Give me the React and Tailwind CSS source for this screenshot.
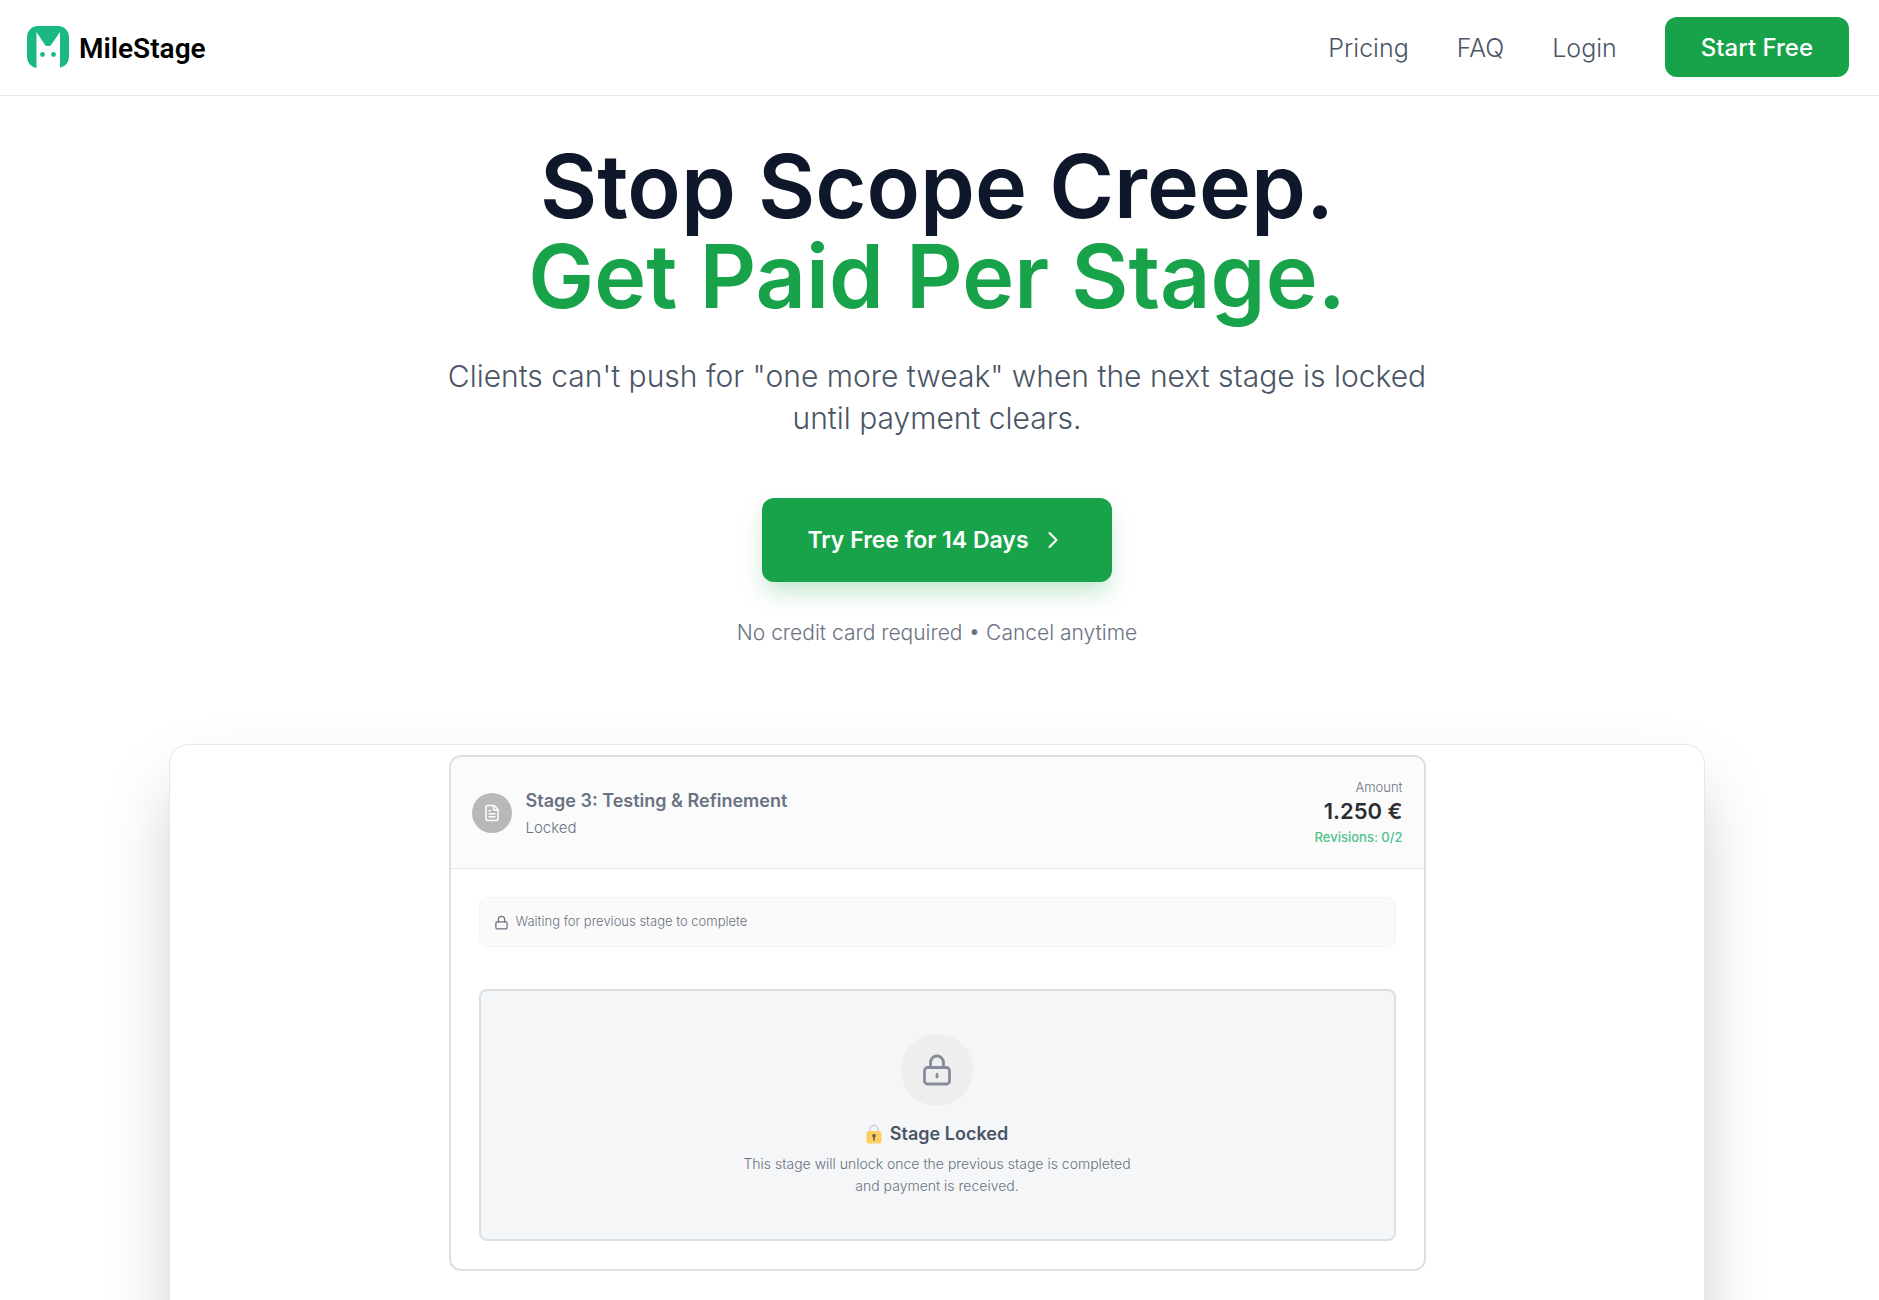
import React from 'react';
import { ChevronRight, FileText, Lock } from 'lucide-react';

const navLinks = ['Pricing', 'FAQ', 'Login'];

function Logo() {
  return (
    <a href="#" className="flex items-center gap-[10px]">
      <svg viewBox="0 0 42 42" className="h-[42px] w-[42px]" aria-hidden="true">
        <path
          d="M11 0h20a11 11 0 0 1 11 11v20a11 11 0 0 1-9 10.800V6L24 19q-1 1-2 1h-2q-1 0-2-1L9.500 6v35.900A11 11 0 0 1 0 31V11A11 11 0 0 1 11 0z"
          fill="#1bb981"
        />
        <circle cx="15.500" cy="28.500" r="2.400" fill="#1bb981" />
        <circle cx="26.500" cy="28.500" r="2.400" fill="#1bb981" />
      </svg>
      <span className="pt-1 font-[Roboto] text-[28px] leading-9 font-semibold text-black">MileStage</span>
    </a>
  );
}

function Header() {
  return (
    <header className="flex h-24 items-center justify-between border-b border-gray-200 pr-[30px] pb-px pl-[27px]">
      <Logo />
      <nav className="flex items-center gap-12">
        {navLinks.map((label) => (
          <a key={label} href="#" className="pt-[2px] text-[25px] leading-8 font-light text-gray-600">
            {label}
          </a>
        ))}
        <button className="h-[60px] rounded-xl bg-[#18a34a] px-9 pt-[2px] text-2xl font-medium text-white">
          Start Free
        </button>
      </nav>
    </header>
  );
}

function Hero() {
  return (
    <section className="flex flex-col items-center px-6 pt-[45px] text-center">
      <h1 className="text-[88px] leading-[90px] font-semibold text-[#0f172a]">
        Stop Scope Creep.
        <br />
        <span className="text-[#18a34a]">Get Paid Per Stage.</span>
      </h1>
      <p className="mt-[34px] max-w-[1020px] text-[30px] leading-[42px] font-light text-gray-600">
        Clients can't push for "one more tweak" when the next stage is locked until payment clears.
      </p>
      <button className="mt-[59px] flex h-[84px] items-center gap-[10px] rounded-xl bg-[#18a34a] px-[45px] text-[23px] leading-8 font-semibold text-white shadow-[0_12px_24px_-4px_rgba(22,163,74,0.3)]">
        Try Free for 14 Days
        <ChevronRight size={28} strokeWidth={1.75} />
      </button>
      <p className="mt-9 text-[21px] leading-[30px] font-light text-gray-500">
        No credit card required • Cancel anytime
      </p>
    </section>
  );
}

function PadlockEmoji() {
  return (
    <svg viewBox="0 0 16 20" className="h-5 w-4" aria-hidden="true">
      <path d="M4 9V5.500a4 4 0 0 1 8 0V9" fill="none" stroke="#d5d8dc" strokeWidth="1.800" />
      <rect x="0.500" y="7" width="15" height="12.500" rx="2" fill="#fbcf62" />
      <circle cx="8" cy="11.800" r="1.800" fill="#6b5b4b" />
      <path d="M7.200 12h1.600v4.500H7.200z" fill="#6b5b4b" />
    </svg>
  );
}

function StageCard() {
  return (
    <article className="w-full max-w-[977px] rounded-xl border-2 border-[#dbe0e4] bg-white">
      <div className="flex items-center justify-between rounded-t-xl border-b border-gray-200 bg-[#fbfbfb] px-[21px] pt-5 pb-[19px]">
        <div className="flex items-center gap-[14px]">
          <span className="flex h-10 w-10 items-center justify-center rounded-full bg-[#b8b8b8] text-white">
            <FileText size={18} strokeWidth={2} />
          </span>
          <div className="pt-[2px]">
            <h2 className="text-lg leading-7 font-semibold text-gray-500">Stage 3: Testing &amp; Refinement</h2>
            <p className="text-[15px] leading-[26px] font-light text-gray-500">Locked</p>
          </div>
        </div>
        <div className="text-right">
          <p className="text-[13px] leading-5 font-light text-gray-500">Amount</p>
          <p className="text-[22px] leading-7 font-semibold text-[#2b2d33]">1.250 €</p>
          <p className="text-[13px] leading-6 font-medium text-[#4fc28a]">Revisions: 0/2</p>
        </div>
      </div>
      <div className="px-7 pt-7 pb-7">
        <div className="flex h-[50px] items-center gap-[7px] rounded-lg border border-[#f5f5f5] bg-[#fafafa] px-[14px] text-[13px] font-light text-gray-500">
          <Lock size={15} strokeWidth={2} />
          Waiting for previous stage to complete
        </div>
        <div className="mt-[42px] flex flex-col items-center rounded-lg border-2 border-[#dbe0e4] bg-[#f5f6f8] pt-[43px] pb-[42px] text-center">
          <span className="flex h-[72px] w-[72px] items-center justify-center rounded-full bg-[#eeeeee] text-[#868b99]">
            <svg viewBox="0 0 28 32" className="h-8 w-7" fill="none" stroke="currentColor" strokeWidth="2.800" aria-hidden="true">
              <rect x="1.500" y="13.500" width="25" height="16.500" rx="3" />
              <path d="M7.500 13.500V8.500a6.500 6.500 0 0 1 13 0v5" />
              <path d="M14 20.500v2.500" strokeLinecap="round" />
            </svg>
          </span>
          <h3 className="mt-[14px] flex items-center gap-2 text-lg leading-7 font-semibold text-gray-600">
            <PadlockEmoji />
            Stage Locked
          </h3>
          <p className="mt-[5px] max-w-[400px] text-[14px] leading-[22px] font-light text-gray-500">
            This stage will unlock once the previous stage is completed and payment is received.
          </p>
        </div>
      </div>
    </article>
  );
}

export default function App() {
  return (
    <div className="h-screen overflow-hidden bg-white font-[Inter,sans-serif]">
      <Header />
      <main className="pr-[5px]">
        <Hero />
        <section className="mx-auto mt-24 flex h-[720px] w-full max-w-[1536px] justify-center rounded-[20px] border border-gray-200 bg-white px-6 pt-[10px] shadow-[0_36px_72px_-12px_rgba(0,0,0,0.25)]">
          <div className="flex w-full items-start justify-center">
            <StageCard />
          </div>
        </section>
      </main>
    </div>
  );
}
